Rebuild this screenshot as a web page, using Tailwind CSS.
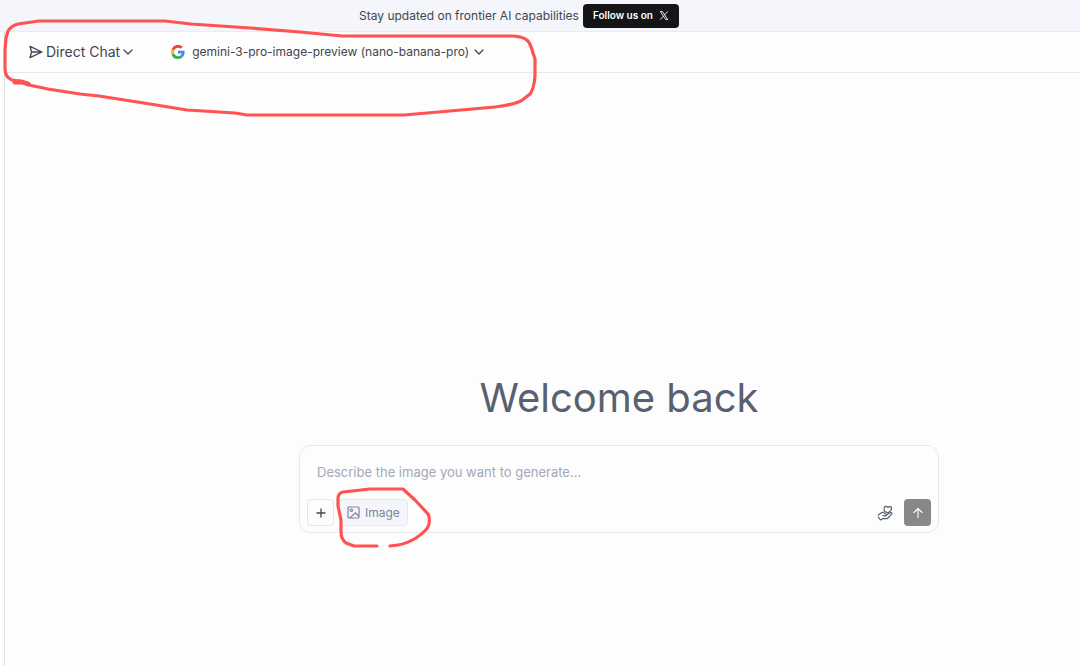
<!DOCTYPE html>
<html lang="en">
<head>
    <meta charset="UTF-8">
    <meta name="viewport" content="width=device-width, initial-scale=1.0">
    <title>Direct Chat</title>
    <script src="https://cdn.jsdelivr.net/npm/@tailwindcss/browser@4"></script>
</head>
<body class="relative min-h-screen flex flex-col overflow-hidden bg-[#fdfdfd] font-['Inter',sans-serif] text-[#41454d]">
    <!-- Announcement bar -->
    <div class="h-8 shrink-0 flex items-center justify-center gap-1 pr-[42px] bg-[#f5f6fc] border-b border-[#ebecef] text-[12px]">
        <span>Stay updated on frontier AI capabilities</span>
        <a href="#" class="h-6 px-[10px] flex items-center gap-[6px] rounded bg-[#141517] text-[10px] font-semibold text-white">
            Follow us on
            <svg class="w-[10px] h-[9px]" viewBox="0 0 24 24" fill="none" stroke="currentColor" stroke-width="2.400"><path d="M2 1h5.500L22 23h-5.500zM22 1l-9 10M2 23l8.500-9.500"/></svg>
        </a>
    </div>

    <div class="grow flex flex-col ml-1 border-l border-[#dfe1e5]">
        <header class="h-[41px] shrink-0 flex items-center gap-[38px] pl-6 border-b border-[#e7e8eb]">
            <button class="flex items-center gap-[3px] text-sm">
                <svg class="w-[14px] h-[14px]" viewBox="0 0 14 14" fill="none" stroke="currentColor" stroke-width="1.300" stroke-linejoin="round" stroke-linecap="round"><path d="M1 1.300 13 7 1 12.700 2.600 7zM2.600 7H12"/></svg>
                Direct Chat
                <svg class="w-[10px] h-[10px]" viewBox="0 0 10 10" fill="none" stroke="currentColor" stroke-width="1.300" stroke-linecap="round" stroke-linejoin="round"><path d="m1 3 4 4 4-4"/></svg>
            </button>
            <button class="flex items-center gap-[5px] text-[12px]">
                <svg class="w-[14px] h-[14px] mr-[2px]" viewBox="0 0 48 48"><path fill="#4285F4" d="M46.500 24.500c0-1.600-.1-3.100-.4-4.500H24v9h12.700c-.6 3-2.200 5.500-4.700 7.200l7.400 5.700c4.400-4 7.100-10 7.100-17.400z"/><path fill="#FBBC05" d="M10.500 28.600A14.500 14.500 0 0 1 10.500 19.400l-7.900-6.200a24 24 0 0 0 0 21.600z"/><path fill="#EA4335" d="M24 9.500c3.500 0 6.700 1.200 9.200 3.600l6.900-6.900A23.900 23.900 0 0 0 2.600 13.200l7.900 6.200A14.300 14.300 0 0 1 24 9.500z"/><path fill="#34A853" d="M24 48c6.500 0 11.900-2.100 15.900-5.800l-7.900-6a14.500 14.500 0 0 1-21.500-7.600l-7.900 6.200A24 24 0 0 0 24 48z"/></svg>
                gemini-3-pro-image-preview (nano-banana-pro)
                <svg class="w-[10px] h-[10px]" viewBox="0 0 10 10" fill="none" stroke="currentColor" stroke-width="1.300" stroke-linecap="round" stroke-linejoin="round"><path d="m1 3 4 4 4-4"/></svg>
            </button>
        </header>

        <main class="grow flex flex-col items-center pt-[301px] pl-[153px]">
            <h1 class="mb-[23px] text-[40px] leading-12 text-[#596171]">Welcome back</h1>
            <form class="w-full max-w-[640px] px-[7px] pt-[15px] pb-[6px] rounded-xl border border-[#e8e9ec]">
                <input type="text" aria-label="Prompt" placeholder="Describe the image you want to generate..." class="block w-full h-[22px] mb-4 px-[10px] text-[13px] outline-none placeholder:text-[#a3a8b8]">
                <div class="flex items-center gap-[5px]">
                    <button type="button" aria-label="Add" class="w-[27px] h-[27px] flex items-center justify-center rounded border border-[#e3e5ea]">
                        <svg class="w-[10px] h-[10px]" viewBox="0 0 10 10" fill="none" stroke="currentColor" stroke-width="1.300" stroke-linecap="round"><path d="M5 1v8M1 5h8"/></svg>
                    </button>
                    <button type="button" class="h-[27px] px-[7px] flex items-center gap-[5px] rounded border border-[#e6e8f0] bg-[#f5f6fc] text-[12px] text-[#7e869a]">
                        <svg class="w-[13px] h-[13px]" viewBox="0 0 13 13" fill="none" stroke="currentColor" stroke-width="1.200" stroke-linecap="round" stroke-linejoin="round"><rect x="1" y="1" width="11" height="11" rx="1"/><circle cx="4.300" cy="4.300" r="1.200"/><path d="m3 12 5.200-5.200L12 10.200"/></svg>
                        Image
                    </button>
                    <button type="button" aria-label="Donate" class="ml-auto mr-[6px] text-[#596171]">
                        <svg class="w-4 h-4" viewBox="0 0 16 16" fill="none" stroke="currentColor" stroke-width="1.200" stroke-linecap="round" stroke-linejoin="round"><path d="M7.200 6.200V3.200C7.200 1.200 9.700.8 10.900 2.500c1.300-1.700 3.900-1 3.700 1.200-.1 1.500-1.500 2.700-3.700 4.200z"/><path d="M1.200 10 4 7.900c1-.7 2-.7 2.900-.1l2.200 1.400c.9.800.2 1.900-.9 1.700L6 10.600M9.200 10.200 13 7.700c1.500-.8 2.500.5 1.500 1.700L11 13c-.6.5-1.200.7-2 .7H5.600L4.200 14.800M1.200 12.200l2.300 2.600"/></svg>
                    </button>
                    <button type="submit" aria-label="Send" class="w-[27px] h-[27px] flex items-center justify-center rounded bg-[#888889] text-white">
                        <svg class="w-[10px] h-[10px]" viewBox="0 0 10 10" fill="none" stroke="currentColor" stroke-width="1.100" stroke-linecap="round" stroke-linejoin="round"><path d="M5 9.500v-9M1 4.500l4-4 4 4"/></svg>
                    </button>
                </div>
            </form>
        </main>
    </div>

    <!-- Red pen marks over the page -->
    <svg class="absolute top-0 left-0 w-[1080px] h-[666px] pointer-events-none" viewBox="0 0 1080 666" fill="none" stroke="#ff5252" stroke-width="3.200" stroke-linecap="round" stroke-linejoin="round">
        <path d="M29 84 19 81 12 80Q5 77 5 69V50L6 38 8 31Q11 26 18 24L39 21H165L191 24 250 28 300 32 342 36H510Q523 36 528 41 531 45 533 53L535 59V76Q534 89 530 94L521 101Q512 105 495 107L450 111 404 115H247L235 113 187 110 150 104 99 96 80 94 48 89 29 85"/>
        <path d="M15 82h7l6 2" stroke-width="5"/>
        <path d="M377 546H354L346 543Q341 539 341 532V520L338 506V499Q338 493 343 492L370 489H403L415 500 428 514Q430 517 429 524 428 530 416 538 406 544 398 545L390 546"/>
    </svg>
</body>
</html>
